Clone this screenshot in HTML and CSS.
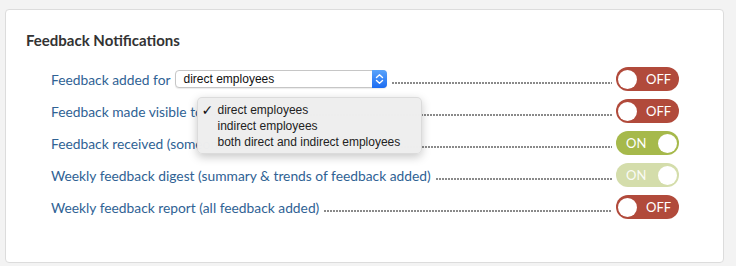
FILE: index.html
```html
<!DOCTYPE html>
<html>
<head>
<meta charset="utf-8">
<link rel="stylesheet" href="styles.css">
</head>
<body>
<div class="card">
  <h2 class="title">Feedback Notifications</h2>
  <div class="list">
    <div class="row">
      <span class="label">Feedback added for</span>
      <div class="select">
        <span class="select-text">direct employees</span>
        <span class="select-btn">
          <svg width="9" height="12" viewBox="0 0 9 12"><path d="M1.5 4.5 L4.5 1.8 L7.5 4.5 M1.5 7.5 L4.5 10.2 L7.5 7.5" fill="none" stroke="#fff" stroke-width="1.4" stroke-linecap="round" stroke-linejoin="round"/></svg>
        </span>
        <div class="menu">
          <div class="item"><span class="check">✓</span>direct employees</div>
          <div class="item">indirect employees</div>
          <div class="item">both direct and indirect employees</div>
        </div>
      </div>
      <span class="leader"></span>
      <span class="toggle off"><span class="knob"></span><span class="tt">OFF</span></span>
    </div>
    <div class="row">
      <span class="label">Feedback made visible to</span>
      <span class="leader"></span>
      <span class="toggle off"><span class="knob"></span><span class="tt">OFF</span></span>
    </div>
    <div class="row">
      <span class="label">Feedback received (someone added)</span>
      <span class="leader"></span>
      <span class="toggle on"><span class="tt">ON</span><span class="knob"></span></span>
    </div>
    <div class="row">
      <span class="label">Weekly feedback digest (summary &amp; trends of feedback added)</span>
      <span class="leader"></span>
      <span class="toggle on dim"><span class="tt">ON</span><span class="knob"></span></span>
    </div>
    <div class="row">
      <span class="label">Weekly feedback report (all feedback added)</span>
      <span class="leader"></span>
      <span class="toggle off"><span class="knob"></span><span class="tt">OFF</span></span>
    </div>
  </div>
</div>
</body>
</html>
```

FILE: styles.css
```css
html, body {
  margin: 0;
  padding: 0;
  background: #f3f3f3;
}
body {
  font-family: Lato, "Open Sans", sans-serif;
}
.card {
  box-sizing: border-box;
  margin: 9px 12px 0 5px;
  height: 254px;
  background: #fff;
  border: 1px solid #dcdcdc;
  border-radius: 4px;
  padding: 20px 44px 0 20px;
}
.title {
  margin: 0 0 13px 0;
  font-size: 15px;
  line-height: 20px;
  font-weight: 700;
  color: #333;
}
.list {
  margin-left: 25px;
}
.row {
  display: flex;
  align-items: center;
  height: 32px;
}
.label {
  font-size: 13.8px;
  color: #2f6294;
  white-space: nowrap;
}
.leader {
  flex: 1;
  height: 2px;
  margin: 8px 4px 0 5px;
  background-image: linear-gradient(to right, #8a8a8a 2px, transparent 2px);
  background-size: 3px 2px;
}
.toggle {
  position: relative;
  box-sizing: border-box;
  width: 63px;
  height: 24px;
  border-radius: 12px;
  display: flex;
  align-items: center;
  padding: 0 2px;
  color: #fff;
  font-size: 13px;
}
.toggle.off { background: #b14a3b; }
.toggle.on { background: #a6b94b; }
.toggle.on.dim { background: #d4ddab; }
.toggle.dim .tt { color: rgba(255,255,255,0.9); }
.knob {
  width: 19px;
  height: 19px;
  border-radius: 50%;
  background: #fff;
}
.toggle.off .tt { margin-left: 9px; }
.toggle.on .tt { margin-left: 8px; margin-right: auto; }
.select {
  position: relative;
  box-sizing: border-box;
  margin-left: 4px;
  width: 212px;
  height: 18px;
  border: 1px solid #c6c6c6;
  border-radius: 4px;
  background: #fff;
  box-shadow: 0 1px 1px rgba(0,0,0,0.08);
  display: flex;
  align-items: center;
  font-family: "Liberation Sans", Arial, sans-serif;
  font-size: 12px;
  color: #111;
}
.select-text {
  flex: 1;
  padding-left: 8px;
}
.select-btn {
  align-self: stretch;
  width: 15px;
  margin: -1px -1px -1px 0;
  border-radius: 0 4px 4px 0;
  background: linear-gradient(#5aa4fb, #1b6cf2);
  display: flex;
  align-items: center;
  justify-content: center;
}
.menu {
  position: absolute;
  left: 21px;
  top: 26px;
  width: 225px;
  height: 57px;
  box-sizing: border-box;
  padding-top: 4px;
  background: rgba(238,238,238,0.99);
  border: 1px solid rgba(0,0,0,0.08);
  border-radius: 5px;
  box-shadow: 0 3px 10px rgba(0,0,0,0.22);
  z-index: 5;
}
.item {
  position: relative;
  padding-left: 20px;
  line-height: 16px;
  font-size: 12px;
  color: #222;
  white-space: nowrap;
}
.check {
  position: absolute;
  left: 4px;
  top: 0;
  font-family: "DejaVu Sans", sans-serif;
  font-size: 14px;
  color: #111;
}
```
